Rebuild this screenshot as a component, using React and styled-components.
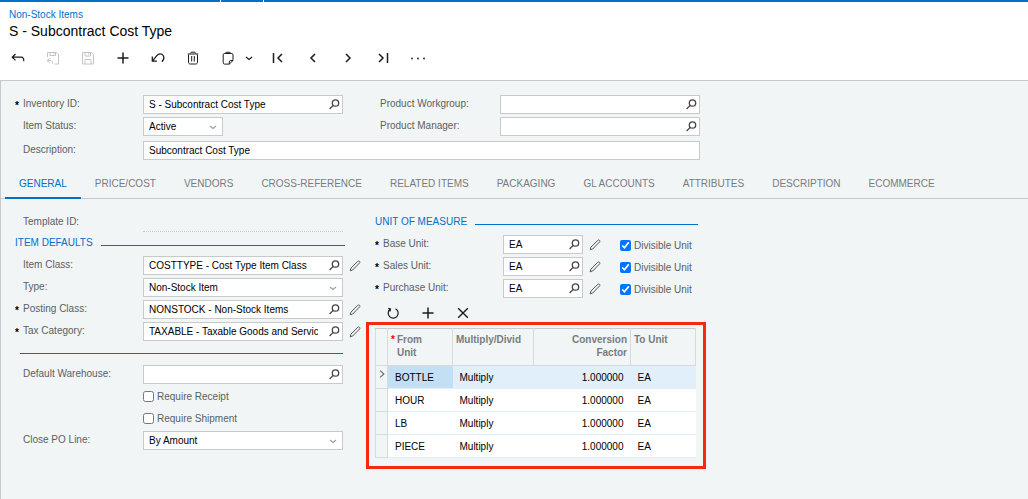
import React, { useState } from 'react';
import styled, { createGlobalStyle } from 'styled-components';

const TABS = [
  'General',
  'Price/Cost',
  'Vendors',
  'Cross-Reference',
  'Related Items',
  'Packaging',
  'GL Accounts',
  'Attributes',
  'Description',
  'Ecommerce',
];

const UNITS = [
  { id: 'base-unit', label: 'Base Unit:' },
  { id: 'sales-unit', label: 'Sales Unit:' },
  { id: 'purchase-unit', label: 'Purchase Unit:' },
];

const CONVERSIONS = [
  { from: 'BOTTLE', action: 'Multiply', factor: '1.000000', to: 'EA' },
  { from: 'HOUR', action: 'Multiply', factor: '1.000000', to: 'EA' },
  { from: 'LB', action: 'Multiply', factor: '1.000000', to: 'EA' },
  { from: 'PIECE', action: 'Multiply', factor: '1.000000', to: 'EA' },
];

const ICONS = {
  back: <path d="M5.5 4 2.2 7.200l3.300 3.200M2.200 7.200h9c1.800 0 2.600 1.200 2.600 4" strokeWidth="1.200" />,
  saveClose: (
    <path d="M2.500 7V2.500h9l2 2v9.500H9.500M5 2.500v3h5.500v-3M9 3v1.500M4.500 8.500l-2.300 2.200 2.300 2.200M2.200 10.700h3.600c1.200 0 1.700 1 1.700 2.800" />
  ),
  save: <path d="M2.500 2.500h9l2 2v9.500h-11zM5 2.500v3.500h5.500v-3.500M8.800 3v1.500M5 14v-4.500h6v4.500" />,
  plus: <path d="M8 2.500v11M2.500 8h11" strokeWidth="1.500" />,
  undo: (
    <path d="M2.300 6.500v4.700h4.700M2.600 10.900 6.800 5.700c1.900-2.300 5-2.300 6.400-.2 1.200 2 .5 4.300-1.300 6.200" strokeWidth="1.300" />
  ),
  trash: (
    <path d="M3.500 4.500v7.500c0 1.200.6 2 1.800 2h5.400c1.200 0 1.800-.8 1.800-2v-7.500M2.800 4h10.400M5.500 3.500c0-1 .5-1.300 1.500-1.300h2c1 0 1.500.3 1.500 1.300M6.700 6v5.500M9.300 6v5.500" />
  ),
  clipboard: (
    <path d="M5.500 3.500h-1c-.8 0-1.300.5-1.300 1.300v7.900c0 .9.500 1.400 1.300 1.400h4.800l3.700-3.600v-5.700c0-.8-.5-1.300-1.300-1.300h-1.200M5 3.500c.3-.8.900-1.200 1.700-1.200h2.600c.8 0 1.300.4 1.600 1.200zM9.300 14v-2.200c0-.8.4-1.300 1.200-1.300h2.500" />
  ),
  down: <path d="M5 7l3 2.500L11 7" strokeWidth="1.200" />,
  first: <path d="M3.500 3v10M12 4 8 8l4 4" strokeWidth="1.500" />,
  prev: <path d="M10 4 6 8l4 4" strokeWidth="1.500" />,
  next: <path d="M6 4l4 4-4 4" strokeWidth="1.500" />,
  last: <path d="M4 4l4 4-4 4M12.500 3v10" strokeWidth="1.500" />,
  dots: (
    <g fill="currentColor" stroke="none">
      <circle cx="2" cy="8.500" r=".9" />
      <circle cx="8" cy="8.500" r=".9" />
      <circle cx="14" cy="8.500" r=".9" />
    </g>
  ),
  search: <path d="M12.700 6a3.200 3.200 0 1 1-6.400 0a3.200 3.200 0 1 1 6.400 0M7.200 8.400 3.600 12" strokeWidth="1.300" />,
  pencil: (
    <path d="M3.200 12.800l.7-2.600 6.900-6.900c.5-.5 1.200-.5 1.700 0s.5 1.200 0 1.700L5.700 12z" strokeWidth="1" />
  ),
  refresh: <path d="M5 4.300a5 5 0 1 0 5.500-.6M3.200 3.300l2.300.7-.5 2.500" strokeWidth="1.200" />,
  close: <path d="M3.200 3.200l9.600 9.600M12.800 3.200l-9.600 9.600" strokeWidth="1.400" />,
  caret: <path d="M5.500 3.500 10.500 8l-5 4.500" strokeWidth="1.500" />,
};

const Icon = ({ name, size = 16 }) => (
  <svg
    width={size}
    height={size}
    viewBox="0 0 16 16"
    fill="none"
    stroke="currentColor"
    strokeWidth="1"
    aria-hidden="true"
  >
    {ICONS[name]}
  </svg>
);

const FieldLabel = ({ id, required, children }) => (
  <Label htmlFor={id}>
    <Mark>{required ? '*' : ''}</Mark>
    {children}
  </Label>
);

const Lookup = ({ id, value = '' }) => (
  <Control>
    <TextBox id={id} defaultValue={value} $lookup />
    <LookupButton type="button" aria-label="Look up">
      <Icon name="search" />
    </LookupButton>
  </Control>
);

const DropDown = ({ id, value }) => (
  <Control>
    <Select id={id} defaultValue={value}>
      <option>{value}</option>
    </Select>
    <SelectArrow>
      <Icon name="down" />
    </SelectArrow>
  </Control>
);

const EditButton = () => (
  <PencilButton type="button" aria-label="Edit">
    <Icon name="pencil" />
  </PencilButton>
);

const CheckBox = ({ checked, children }) => (
  <CheckLabel>
    <input type="checkbox" defaultChecked={checked} />
    {children}
  </CheckLabel>
);

const Toolbar = () => (
  <ToolbarBox>
    <ToolButton aria-label="Back"><Icon name="back" /></ToolButton>
    <ToolButton aria-label="Save and close" disabled><Icon name="saveClose" /></ToolButton>
    <ToolButton aria-label="Save" disabled><Icon name="save" /></ToolButton>
    <ToolButton aria-label="Add"><Icon name="plus" /></ToolButton>
    <ToolButton aria-label="Undo"><Icon name="undo" /></ToolButton>
    <ToolButton aria-label="Delete"><Icon name="trash" /></ToolButton>
    <ToolButton aria-label="Clipboard"><Icon name="clipboard" /></ToolButton>
    <ToolButton aria-label="Clipboard menu" $narrow><Icon name="down" /></ToolButton>
    <ToolButton aria-label="First"><Icon name="first" /></ToolButton>
    <ToolButton aria-label="Previous"><Icon name="prev" /></ToolButton>
    <ToolButton aria-label="Next"><Icon name="next" /></ToolButton>
    <ToolButton aria-label="Last"><Icon name="last" /></ToolButton>
    <ToolButton aria-label="More"><Icon name="dots" /></ToolButton>
  </ToolbarBox>
);

const Summary = () => (
  <SummaryBox>
    <SummaryColumns>
      <Fields>
        <Row>
          <FieldLabel id="inventory-id" required>Inventory ID:</FieldLabel>
          <Lookup id="inventory-id" value="S - Subcontract Cost Type" />
        </Row>
        <Row $control="80px">
          <FieldLabel id="item-status">Item Status:</FieldLabel>
          <DropDown id="item-status" value="Active" />
        </Row>
      </Fields>
      <Fields>
        <Row $label="120px">
          <Label htmlFor="workgroup">Product Workgroup:</Label>
          <Lookup id="workgroup" />
        </Row>
        <Row $label="120px">
          <Label htmlFor="manager">Product Manager:</Label>
          <Lookup id="manager" />
        </Row>
      </Fields>
    </SummaryColumns>
    <Row $control="557px">
      <FieldLabel id="description">Description:</FieldLabel>
      <TextBox id="description" defaultValue="Subcontract Cost Type" />
    </Row>
  </SummaryBox>
);

const ItemDefaults = () => (
  <DefaultsColumn>
    <Row>
      <FieldLabel id="template-id">Template ID:</FieldLabel>
      <ReadOnlyBox id="template-id" readOnly />
    </Row>
    <Legend>Item Defaults</Legend>
    <Fields>
      <Row>
        <FieldLabel id="item-class">Item Class:</FieldLabel>
        <Lookup id="item-class" value="COSTTYPE - Cost Type Item Class" />
        <EditButton />
      </Row>
      <Row>
        <FieldLabel id="type">Type:</FieldLabel>
        <DropDown id="type" value="Non-Stock Item" />
      </Row>
      <Row>
        <FieldLabel id="posting-class" required>Posting Class:</FieldLabel>
        <Lookup id="posting-class" value="NONSTOCK - Non-Stock Items" />
        <EditButton />
      </Row>
      <Row>
        <FieldLabel id="tax-category" required>Tax Category:</FieldLabel>
        <Lookup id="tax-category" value="TAXABLE - Taxable Goods and Services" />
        <EditButton />
      </Row>
    </Fields>
    <Divider />
    <Fields>
      <Row>
        <FieldLabel id="warehouse">Default Warehouse:</FieldLabel>
        <Lookup id="warehouse" />
      </Row>
      <Row>
        <span />
        <CheckBox>Require Receipt</CheckBox>
      </Row>
      <Row>
        <span />
        <CheckBox>Require Shipment</CheckBox>
      </Row>
      <Row>
        <FieldLabel id="close-po">Close PO Line:</FieldLabel>
        <DropDown id="close-po" value="By Amount" />
      </Row>
    </Fields>
  </DefaultsColumn>
);

const ConversionTable = () => (
  <Table>
    <colgroup>
      <col width="12" />
      <col width="65" />
      <col width="81" />
      <col width="97" />
      <col width="65" />
    </colgroup>
    <thead>
      <tr>
        <HeadCell />
        <HeadCell>
          <RequiredHead>
            <RedMark>*</RedMark>
            From Unit
          </RequiredHead>
        </HeadCell>
        <HeadCell>Multiply/Divid</HeadCell>
        <HeadCell $right>Conversion Factor</HeadCell>
        <HeadCell>To Unit</HeadCell>
      </tr>
    </thead>
    <tbody>
      {CONVERSIONS.map((row, i) => (
        <BodyRow key={row.from} $selected={i === 0}>
          <MarkerCell>{i === 0 && <Icon name="caret" size={12} />}</MarkerCell>
          <Cell $active={i === 0}>{row.from}</Cell>
          <Cell>{row.action}</Cell>
          <Cell $right>{row.factor}</Cell>
          <Cell>{row.to}</Cell>
        </BodyRow>
      ))}
    </tbody>
  </Table>
);

const UnitOfMeasure = () => (
  <UnitColumn>
    <UnitFields>
      <Legend>Unit of Measure</Legend>
      <Fields>
        {UNITS.map(({ id, label }) => (
          <Row key={id} $control="80px">
            <FieldLabel id={id} required>{label}</FieldLabel>
            <Lookup id={id} value="EA" />
            <EditButton />
            <CheckBox checked>Divisible Unit</CheckBox>
          </Row>
        ))}
      </Fields>
      <GridToolbar>
        <ToolButton aria-label="Refresh"><Icon name="refresh" /></ToolButton>
        <ToolButton aria-label="Add row"><Icon name="plus" /></ToolButton>
        <ToolButton aria-label="Delete row"><Icon name="close" /></ToolButton>
      </GridToolbar>
    </UnitFields>
    <Highlight>
      <ConversionTable />
    </Highlight>
  </UnitColumn>
);

const App = () => {
  const [tab, setTab] = useState('General');

  return (
    <Page>
      <GlobalStyle />
      <TopBar>
        <span />
        <span />
        <span />
      </TopBar>
      <Header>
        <Crumb href="#">Non-Stock Items</Crumb>
        <Title>S - Subcontract Cost Type</Title>
      </Header>
      <Toolbar />
      <Panel>
        <Summary />
        <TabList role="tablist">
          {TABS.map((name) => (
            <Tab
              key={name}
              role="tab"
              aria-selected={tab === name}
              $active={tab === name}
              onClick={() => setTab(name)}
            >
              {name}
            </Tab>
          ))}
        </TabList>
        <Columns>
          <ItemDefaults />
          <UnitOfMeasure />
        </Columns>
      </Panel>
    </Page>
  );
};

export default App;

const GlobalStyle = createGlobalStyle`
  * {
    box-sizing: border-box;
  }

  body {
    margin: 0;
    background: #fff;
  }

  body, input, select, button {
    font-family: 'Liberation Sans', Arial, Helvetica, sans-serif;
    font-size: 10px;
  }

  button {
    padding: 0;
    border: 0;
    background: none;
    color: inherit;
  }

  svg {
    flex: none;
    display: block;
  }
`;

const Page = styled.div`
  display: flex;
  flex-direction: column;
  min-height: 100vh;
  color: #000;
`;

const TopBar = styled.div`
  display: grid;
  grid-template-columns: 220px 42px 1fr;
  gap: 1px;
  height: 2px;

  & > span {
    background: #0070c9;
  }
`;

const Header = styled.header`
  display: flex;
  flex-direction: column;
  align-items: flex-start;
  padding: 6px 9px 0;
`;

const Crumb = styled.a`
  line-height: 13px;
  color: #0070c9;
  text-decoration: none;
`;

const Title = styled.h1`
  margin: 0;
  font-size: 14px;
  font-weight: normal;
  line-height: 20px;
`;

const ToolbarBox = styled.div`
  display: flex;
  height: 39px;
  padding-bottom: 6px;
`;

const ToolButton = styled.button.attrs({ type: 'button' })`
  display: flex;
  align-items: center;
  justify-content: center;
  width: ${({ $narrow }) => ($narrow ? '15px' : '35px')};
  padding-right: ${({ $narrow }) => ($narrow ? '8px' : '0')};
  color: #1c1c1c;

  &:disabled {
    color: #c4c4c4;
  }
`;

const Panel = styled.main`
  flex: 1;
  border: solid #c6cacd;
  border-width: 1px 0 0 1px;
  background: #f1f5f6;
`;

const SummaryBox = styled.section`
  display: flex;
  flex-direction: column;
  gap: 5px;
  padding: 14px 0 0 14px;
`;

const SummaryColumns = styled.div`
  display: flex;
`;

const Fields = styled.div`
  display: flex;
  flex-direction: column;
  gap: 3px;
`;

const Row = styled.div`
  display: grid;
  grid-template-columns: ${({ $label = '128px', $control = '200px' }) => `${$label} ${$control}`} 37px auto;
  justify-content: start;
  height: 19px;
`;

const Label = styled.label`
  display: flex;
  line-height: 18px;
  color: #5a5f63;
`;

const Mark = styled.span`
  width: 8px;
  padding-top: 2px;
  font-weight: bold;
  color: #000;
`;

const Control = styled.div`
  position: relative;
  display: flex;
`;

const TextBox = styled.input`
  width: 100%;
  height: 19px;
  padding: 0 ${({ $lookup }) => ($lookup ? '24px' : '5px')} 0 5px;
  border: 1px solid #c6cacd;
  border-radius: 0;
  background: #fff;
  color: #000;
`;

const ReadOnlyBox = styled(TextBox)`
  border: 0;
  border-bottom: 1px dotted #c6cacd;
  background: none;
`;

const LookupButton = styled.button`
  position: absolute;
  top: 2px;
  right: 1px;
  color: #444;
`;

const Select = styled.select`
  width: 100%;
  height: 19px;
  padding: 0 5px;
  border: 1px solid #c6cacd;
  border-radius: 0;
  background: #fff;
  color: #000;
  appearance: none;
`;

const SelectArrow = styled.span`
  position: absolute;
  top: 2px;
  right: 2px;
  color: #9a9fa3;
  pointer-events: none;
`;

const PencilButton = styled.button`
  display: flex;
  align-items: center;
  padding-left: 4px;
  color: #555;
`;

const CheckLabel = styled.label`
  display: flex;
  align-items: center;
  gap: 3px;
  color: #5a5f63;
  white-space: nowrap;

  & > input {
    width: 11px;
    height: 11px;
    margin: 0;
  }
`;

const TabList = styled.div`
  display: flex;
  height: 39px;
  padding-left: 4px;
  border-bottom: 1px solid #c6cacd;
`;

const Tab = styled.button`
  height: 39px;
  padding: 9px 14px 0;
  border-bottom: 2px solid ${({ $active }) => ($active ? '#0070c9' : 'transparent')};
  color: ${({ $active }) => ($active ? '#0070c9' : '#777c80')};
  text-transform: uppercase;
  white-space: nowrap;
`;

const Columns = styled.div`
  display: flex;
  align-items: flex-start;
  gap: 21px;
  padding: 12px 0 24px 14px;
`;

const DefaultsColumn = styled.section`
  width: 330px;
  padding-top: 2px;
`;

const Legend = styled.h2`
  display: flex;
  align-items: center;
  gap: 8px;
  margin: 0 0 4px;
  height: 20px;
  font-size: 10px;
  font-weight: normal;
  color: #0070c9;
  text-transform: uppercase;

  &::after {
    content: '';
    flex: 1;
    height: 1px;
    margin-top: 6px;
    background: #0070c9;
  }
`;

const Divider = styled.hr`
  height: 1px;
  margin: 12px 2px 11px 5px;
  border: 0;
  background: #0070c9;
`;

const UnitColumn = styled.section`
  width: 340px;
`;

const UnitFields = styled.div`
  padding: 0 8px 0 9px;
`;

const GridToolbar = styled.div`
  display: flex;
  height: 24px;
  padding-top: 6px;
`;

const Highlight = styled.div`
  padding: 3px 8px 8px 6px;
  border: 3px solid #f8280f;
`;

const Table = styled.table`
  width: 100%;
  table-layout: fixed;
  border-collapse: collapse;
  border-bottom: 1px solid #c6cacd;
`;

const HeadCell = styled.th`
  height: 37px;
  padding: 4px 3px;
  padding-left: ${({ $right }) => ($right ? '20px' : '3px')};
  border: 1px solid #d5dadd;
  border-top-color: #c6cacd;
  font-weight: bold;
  line-height: 13px;
  vertical-align: top;
  text-align: ${({ $right }) => ($right ? 'right' : 'left')};
  color: #777c80;
  overflow: hidden;
`;

const RequiredHead = styled.div`
  display: flex;
  width: 40px;
  gap: 2px;
`;

const RedMark = styled.span`
  color: #f00;
`;

const BodyRow = styled.tr`
  height: 23px;
  background: ${({ $selected }) => ($selected ? '#e1effa' : '#fff')};
  border-bottom: 1px solid #e1effa;
`;

const Cell = styled.td`
  padding: 0 7px;
  text-align: ${({ $right }) => ($right ? 'right' : 'left')};
  background: ${({ $active }) => ($active ? '#c3dff4' : 'transparent')};
`;

const MarkerCell = styled.td`
  padding: 2px 0 0;
  border: 1px solid #d5dadd;
  background: #f1f5f6;
  color: #666;
  vertical-align: top;
`;
